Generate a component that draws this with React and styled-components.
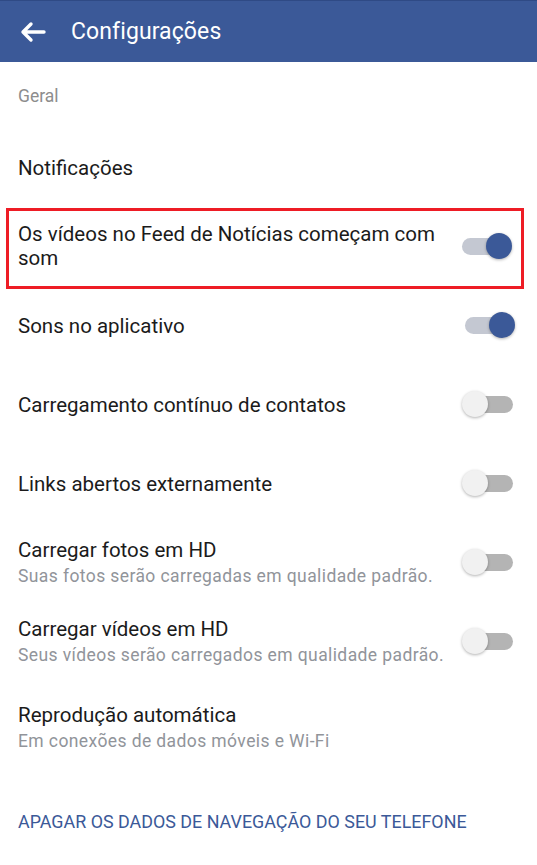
import React from 'react';
import styled, { createGlobalStyle } from 'styled-components';

const GlobalStyle = createGlobalStyle`
  body {
    margin: 0;
    background: #fff;
    font-family: Roboto, "Liberation Sans", sans-serif;
  }
`;

const settings = [
  { title: 'Notificações' },
  { title: 'Os vídeos no Feed de Notícias começam com som', toggle: true, on: true, highlight: true },
  { title: 'Sons no aplicativo', toggle: true, on: true },
  { title: 'Carregamento contínuo de contatos', toggle: true },
  { title: 'Links abertos externamente', toggle: true },
  { title: 'Carregar fotos em HD', sub: 'Suas fotos serão carregadas em qualidade padrão.', toggle: true },
  { title: 'Carregar vídeos em HD', sub: 'Seus vídeos serão carregados em qualidade padrão.', toggle: true },
  { title: 'Reprodução automática', sub: 'Em conexões de dados móveis e Wi-Fi', tall: true },
];

function App() {
  return (
    <Page>
      <GlobalStyle />
      <Header>
        <BackButton>
          <svg width="28" height="22" viewBox="0 0 28 22" fill="none">
            <path
              d="M4 11H25M12 3L4 11L12 19"
              stroke="#fff"
              strokeWidth="3.4"
              strokeLinecap="round"
              strokeLinejoin="round"
            />
          </svg>
        </BackButton>
        <Title>Configurações</Title>
      </Header>
      <SectionLabel>Geral</SectionLabel>
      <List>
        {settings.map((s) => (
          <Row key={s.title} highlight={s.highlight} tall={s.tall}>
            <Text>
              <RowTitle>{s.title}</RowTitle>
              {s.sub && <RowSub>{s.sub}</RowSub>}
            </Text>
            {s.toggle && (
              <Switch on={s.on}>
                <Thumb on={s.on} />
              </Switch>
            )}
          </Row>
        ))}
      </List>
      <ClearLink>APAGAR OS DADOS DE NAVEGAÇÃO DO SEU TELEFONE</ClearLink>
    </Page>
  );
}

const Page = styled.div`
  width: 537px;
  min-height: 865px;
  background: #fff;
`;

const Header = styled.div`
  height: 62px;
  background: #3b5998;
  border-top: 1px solid #2f4a85;
  box-sizing: border-box;
  display: flex;
  align-items: center;
  padding: 0 0 0 19px;
`;

const BackButton = styled.div`
  display: flex;
  align-items: center;
  width: 52px;
`;

const Title = styled.h1`
  margin: 0;
  color: #fff;
  font-size: 23px;
  font-weight: 400;
  letter-spacing: 0.1px;
`;

const SectionLabel = styled.div`
  padding: 24px 18px 0;
  height: 66px;
  box-sizing: border-box;
  color: #8d8d8d;
  font-size: 17.5px;
  line-height: 20px;
`;

const List = styled.div`
  display: flex;
  flex-direction: column;
`;

const Row = styled.div`
  display: flex;
  align-items: center;
  box-sizing: border-box;
  min-height: ${(p) => (p.tall ? '93px' : '79px')};
  padding: 0 24px 0 18px;
  ${(p) =>
    p.highlight &&
    `
    min-height: 81px;
    margin: 1px 13px -3px 6px;
    padding: 0 11px 5px 9px;
    border: 3px solid #ee1c25;
  `}
`;

const Text = styled.div`
  flex: 1;
  padding-right: 12px;
`;

const RowTitle = styled.div`
  color: #1b1b1b;
  font-size: 20.5px;
  line-height: 24px;
`;

const RowSub = styled.div`
  color: #91949a;
  font-size: 17.5px;
  letter-spacing: 0.4px;
  line-height: 22px;
  margin-top: 3px;
  white-space: nowrap;
`;

const Switch = styled.div`
  position: relative;
  flex: none;
  width: 48px;
  height: 17px;
  border-radius: 9px;
  background: ${(p) => (p.on ? '#c4c8d2' : '#b4b4b4')};
`;

const Thumb = styled.div`
  position: absolute;
  top: -5px;
  left: ${(p) => (p.on ? '24px' : '-3px')};
  width: 26px;
  height: 26px;
  border-radius: 50%;
  background: ${(p) => (p.on ? '#3b5998' : '#f1f1f1')};
  box-shadow: 0 1px 3px rgba(0, 0, 0, 0.3);
`;

const ClearLink = styled.div`
  padding: 36px 18px 0;
  color: #3b5998;
  font-size: 17.9px;
  line-height: 24px;
`;

export default App;
